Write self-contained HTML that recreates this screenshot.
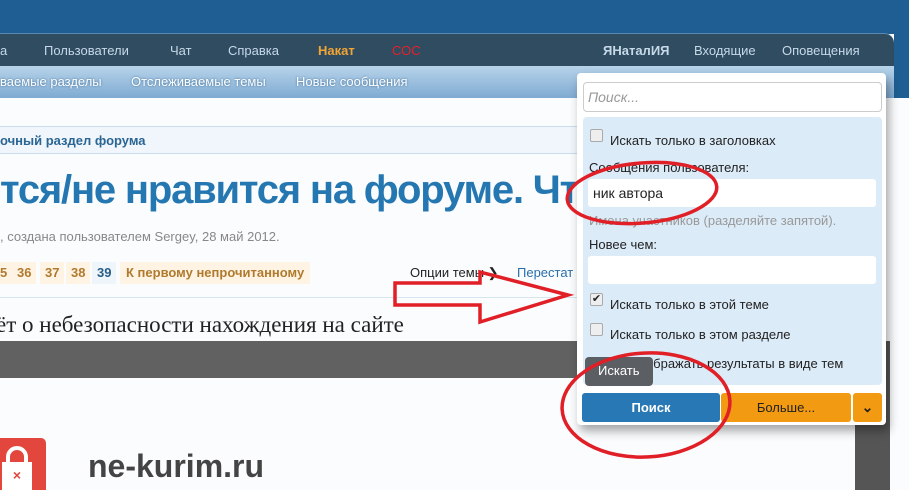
<!DOCTYPE html>
<html><head><meta charset="utf-8"><style>
*{margin:0;padding:0;box-sizing:border-box}
body{width:909px;height:490px;overflow:hidden;position:relative;background:#fff;font-family:"Liberation Sans",sans-serif}
.a{position:absolute;white-space:nowrap}
#top{left:0;top:0;width:909px;height:34px;background:#1e5e92}
#nav{left:0;top:33px;width:894px;height:33px;background:#2f4c61;border-radius:0 10px 0 0;border-top:1px solid #5b8ab0}
#nav span{position:absolute;top:9px;font-size:13px;color:#c7d9e8}
#sub{left:0;top:66px;width:894px;height:32px;background:linear-gradient(#b7d3ea,#7fabd2)}
#sub span{position:absolute;top:8px;font-size:13px;color:#fff;text-shadow:0 0 2px #3a6a94}
#rside{left:894px;top:34px;width:15px;height:64px;background:#1e5e92}
#content{left:0;top:98px;width:909px;height:392px;background:#fafcfe}
.pg{position:absolute;top:262px;height:22px;font-size:13px;font-weight:bold;color:#b07a2e;background:#fff4e3;padding:3px 5px}
</style></head><body>
<div class="a" id="top"></div>
<div class="a" id="rside"></div>
<div class="a" id="nav">
<span style="left:0">а</span><span style="left:44px">Пользователи</span><span style="left:170px">Чат</span><span style="left:228px">Справка</span><span style="left:318px;color:#f3a533;font-weight:bold">Накат</span><span style="left:392px;color:#e4212b">СОС</span>
<span style="left:603px;font-weight:bold">ЯНаталИЯ</span><span style="left:694px">Входящие</span><span style="left:782px">Оповещения</span>
</div>
<div class="a" id="sub"><span style="left:0">ваемые разделы</span><span style="left:131px">Отслеживаемые темы</span><span style="left:296px">Новые сообщения</span></div>
<div class="a" id="content"></div>
<div class="a" style="left:0;top:126px;width:600px;height:28px;border-top:1px solid #c9dcec;border-bottom:1px solid #c9dcec;background:#f0f6fb"></div>
<div class="a" style="left:0;top:133px;font-size:13px;font-weight:bold;color:#2a6593">очный раздел форума</div>
<div class="a" style="left:0;top:168px;font-size:40px;font-weight:bold;color:#2577b1;letter-spacing:-1.2px">тся/не нравится на форуме. Что</div>
<div class="a" style="left:0;top:229px;font-size:13px;color:#888">, создана пользователем Sergey, 28 май 2012.</div>
<div class="pg" style="left:-5px">5</div><div class="pg" style="left:12px">36</div><div class="pg" style="left:40px">37</div><div class="pg" style="left:66px">38</div><div class="pg" style="left:92px;background:#eef5fb;color:#2a5d86">39</div>
<div class="pg" style="left:120px;padding:3px 6px">К первому непрочитанному</div>
<div class="a" style="left:410px;top:265px;font-size:13px;color:#222">Опции темы ❯</div>
<div class="a" style="left:517px;top:265px;font-size:13px;color:#2a6faa">Перестат</div>
<div class="a" style="left:0;top:297px;width:580px;height:1px;background:#d6e5ef"></div>
<div class="a" style="left:-4px;top:312px;font-size:23px;font-family:'Liberation Serif',serif;color:#222">ёт о небезопасности нахождения на сайте</div>
<div class="a" style="left:0;top:341px;width:855px;height:37px;background:#616161"></div>
<div class="a" style="left:855px;top:341px;width:35px;height:149px;background:#555"></div>
<div class="a" style="left:0;top:438px;width:46px;height:52px;background:#e2463d;border-radius:0 5px 0 0"></div>
<div class="a" style="left:6px;top:446px;width:22px;height:24px;border:4px solid #fff;border-radius:11px 11px 0 0"></div>
<div class="a" style="left:2px;top:462px;width:30px;height:28px;background:#fff;color:#e2463d;font-size:14px;font-weight:bold;text-align:center;line-height:26px">×</div>
<div class="a" style="left:88px;top:448px;font-size:32px;font-weight:bold;color:#444">ne-kurim.ru</div>

<div class="a" style="left:577px;top:73px;width:309px;height:352px;background:#fff;border-radius:4px;box-shadow:3px 6px 10px rgba(0,0,0,.35)"></div>
<div class="a" style="left:583px;top:82px;width:299px;height:30px;border:1px solid #ccc;border-radius:4px;background:#fff;font-size:14px;font-style:italic;color:#999;padding:6px 4px">Поиск...</div>
<div class="a" style="left:583px;top:117px;width:299px;height:268px;background:#dcebf8;border-radius:4px"></div>
<div style="font-size:13px;color:#222">
<div class="a" style="left:590px;top:129px;width:13px;height:13px;border:1px solid #aaa;border-radius:2px;background:#eee"></div>
<div class="a" style="left:610px;top:133px">Искать только в заголовках</div>
<div class="a" style="left:589px;top:160px">Сообщения пользователя:</div>
<div class="a" style="left:588px;top:179px;width:288px;height:28px;background:#fff;border-radius:3px;font-size:14px;padding:6px 5px">ник автора</div>
<div class="a" style="left:589px;top:213px;color:#999">Имена участников (разделяйте запятой).</div>
<div class="a" style="left:589px;top:237px">Новее чем:</div>
<div class="a" style="left:588px;top:256px;width:288px;height:28px;background:#fff;border-radius:3px"></div>
<div class="a" style="left:590px;top:293px;width:13px;height:13px;border:1px solid #aaa;border-radius:2px;background:#eee;font-size:11px;line-height:11px;text-align:center">✔</div>
<div class="a" style="left:610px;top:297px">Искать только в этой теме</div>
<div class="a" style="left:590px;top:323px;width:13px;height:13px;border:1px solid #aaa;border-radius:2px;background:#eee"></div>
<div class="a" style="left:610px;top:327px">Искать только в этом разделе</div>
<div class="a" style="left:630px;top:356px">Отображать результаты в виде тем</div>
</div>
<div class="a" style="left:585px;top:357px;width:68px;height:29px;background:#5b5f63;border-radius:4px;color:#fff;font-size:13px;padding:6px 0 0 13px">Искать</div>
<div class="a" style="left:582px;top:393px;width:138px;height:29px;background:#2878b5;border-radius:3px;color:#fff;font-size:13px;font-weight:bold;text-align:center;line-height:29px">Поиск</div>
<div class="a" style="left:721px;top:393px;width:130px;height:29px;background:#f19a12;border-radius:3px;color:#222;font-size:13px;text-align:center;line-height:29px">Больше...</div>
<div class="a" style="left:853px;top:393px;width:29px;height:29px;background:#f19a12;border-radius:3px;color:#222;font-size:14px;font-weight:bold;text-align:center;line-height:29px">⌄</div>

<svg class="a" style="left:0;top:0" width="909" height="490">
<g fill="none" stroke="#e01f26" stroke-width="3.5">
<polygon points="395,283 480,283 480,272 568,295 480,322 480,305 395,305"/>
<ellipse cx="642" cy="193" rx="75" ry="30" transform="rotate(-5 642 193)"/>
<ellipse cx="646" cy="405" rx="84" ry="52" transform="rotate(-3 646 405)"/>
</g></svg>
</body></html>
